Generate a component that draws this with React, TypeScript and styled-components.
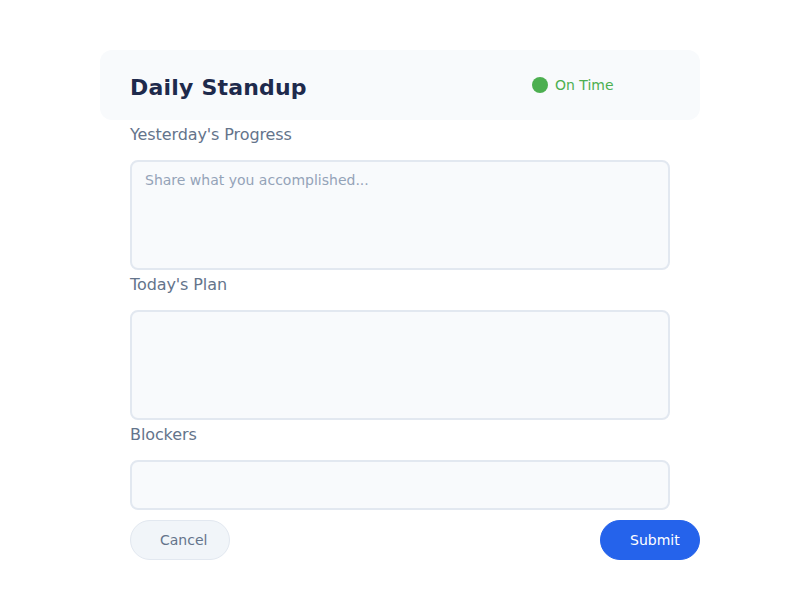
import React from "react";
import styled, { createGlobalStyle } from "styled-components";

const Global = createGlobalStyle`
  html, body { margin: 0; padding: 0; background: #ffffff; }
  body { font-family: "DejaVu Sans", sans-serif; }
  * { box-sizing: border-box; }
`;

const Page = styled.div`
  width: 800px;
  height: 600px;
  padding: 50px 100px 0;
`;

const Card = styled.div`
  width: 600px;
  display: flex;
  flex-direction: column;
`;

const Header = styled.div`
  height: 70px;
  background: #f8fafc;
  border-radius: 12px;
  padding: 0 30px;
  display: flex;
  align-items: center;
  justify-content: space-between;
`;

const Title = styled.h1`
  margin: 4px 0 0;
  font-size: 22px;
  font-weight: 700;
  color: #1e2a4c;
  letter-spacing: 0.2px;
`;

const Status = styled.div`
  width: 138px;
  display: flex;
  align-items: center;
  gap: 7px;
  font-size: 14px;
  color: #4caf50;
`;

const Dot = styled.span`
  width: 16px;
  height: 16px;
  border-radius: 50%;
  background: #4caf50;
`;

const Body = styled.div`
  padding: 0 30px;
  display: flex;
  flex-direction: column;
`;

const Label = styled.label`
  display: block;
  height: 40px;
  line-height: 30px;
  font-size: 16px;
  letter-spacing: -0.1px;
  color: #64748b;
`;

const Field = styled.textarea<{ $h: number }>`
  display: block;
  width: 540px;
  height: ${(p) => p.$h}px;
  resize: none;
  border: 2px solid #e2e8f0;
  border-radius: 8px;
  background: #f8fafc;
  padding: 10px 13px;
  font-family: "DejaVu Sans", sans-serif;
  font-size: 14px;
  color: #334155;
  outline: none;
  &::placeholder { color: #94a3b8; }
`;

const Footer = styled.div`
  margin-top: 10px;
  padding-left: 30px;
  display: flex;
  justify-content: space-between;
`;

const Button = styled.button<{ $primary?: boolean }>`
  width: 100px;
  height: 40px;
  border-radius: 20px;
  padding: 0 0 0 29px;
  text-align: left;
  font-family: "DejaVu Sans", sans-serif;
  font-size: 14px;
  cursor: pointer;
  border: 1px solid ${(p) => (p.$primary ? "#2563eb" : "#e2e8f0")};
  background: ${(p) => (p.$primary ? "#2563eb" : "#f1f5f9")};
  color: ${(p) => (p.$primary ? "#ffffff" : "#64748b")};
`;

export default function App() {
  return (
    <>
      <Global />
      <Page>
        <Card>
          <Header>
            <Title>Daily Standup</Title>
            <Status>
              <Dot />
              On Time
            </Status>
          </Header>
          <Body>
            <Label>Yesterday's Progress</Label>
            <Field $h={110} placeholder="Share what you accomplished..." />
            <Label>Today's Plan</Label>
            <Field $h={110} />
            <Label>Blockers</Label>
            <Field $h={50} />
          </Body>
          <Footer>
            <Button>Cancel</Button>
            <Button $primary>Submit</Button>
          </Footer>
        </Card>
      </Page>
    </>
  );
}
